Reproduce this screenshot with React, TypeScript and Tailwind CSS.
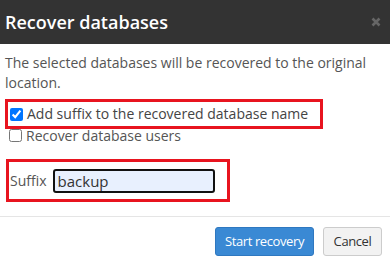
import { useState } from "react";

export default function App() {
  const [addSuffix, setAddSuffix] = useState(true);
  const [recoverUsers, setRecoverUsers] = useState(false);
  const [suffix, setSuffix] = useState("backup");

  return (
    <div className="h-[266px] w-[390px] overflow-hidden bg-white font-['Open_Sans',sans-serif] text-[14px] text-[#555]">
      <div className="flex h-[44px] items-center justify-between bg-[#333] pl-[5px] pr-[9px]">
        <h3 className="text-[18px] font-semibold text-white">Recover databases</h3>
        <button type="button" className="text-[#666]">
          <svg width="10" height="10" viewBox="0 0 10 10">
            <path d="M1.5 1.5 8.5 8.5M8.5 1.5 1.5 8.5" stroke="currentColor" strokeWidth="2.6" />
          </svg>
        </button>
      </div>

      <div className="px-[5px] pt-[9px]">
        <p className="leading-[20px]">
          The selected databases will be recovered to the original location.
        </p>

        <div className="mt-[6px] w-[318px] border-[3px] border-[#e8141f] px-[2px] py-[2px]">
          <label className="flex items-center gap-[4px] leading-[20px] text-[#444]">
            <input
              type="checkbox"
              checked={addSuffix}
              onChange={(e) => setAddSuffix(e.target.checked)}
              className="m-0 h-[13px] w-[13px]"
            />
            Add suffix to the recovered database name
          </label>
        </div>
        <label className="-mt-[1px] flex items-center gap-[4px] pl-[4px] leading-[15px] text-[#555]">
          <input
            type="checkbox"
            checked={recoverUsers}
            onChange={(e) => setRecoverUsers(e.target.checked)}
            className="m-0 h-[13px] w-[13px]"
          />
          Recover database users
        </label>

        <div className="ml-[1px] mt-[16px] flex h-[43px] w-[224px] items-center gap-[6px] border-[3px] border-[#e8141f] pl-[1px]">
          <span className="text-[#555]">Suffix</span>
          <input
            value={suffix}
            onChange={(e) => setSuffix(e.target.value)}
            className="h-[24px] w-[162px] rounded-[3px] border-2 border-[#111] bg-[#e8f0fe] px-[3px] text-[15px] text-[#333] outline-none"
          />
        </div>
      </div>

      <div className="mt-[14px] flex justify-end gap-[9px] border-t border-[#e5e5e5] pr-[8px] pt-[10px]">
        <button
          type="button"
          className="h-[29px] w-[99px] rounded-[3px] border border-[#2f78c0] bg-[#3a89d4] text-[13px] tracking-[-0.4px] text-white"
        >
          Start recovery
        </button>
        <button
          type="button"
          className="h-[29px] w-[59px] rounded-[3px] border border-[#ccc] bg-[#f2f2f2] text-[13px] tracking-[-0.4px] text-[#333]"
        >
          Cancel
        </button>
      </div>
    </div>
  );
}
